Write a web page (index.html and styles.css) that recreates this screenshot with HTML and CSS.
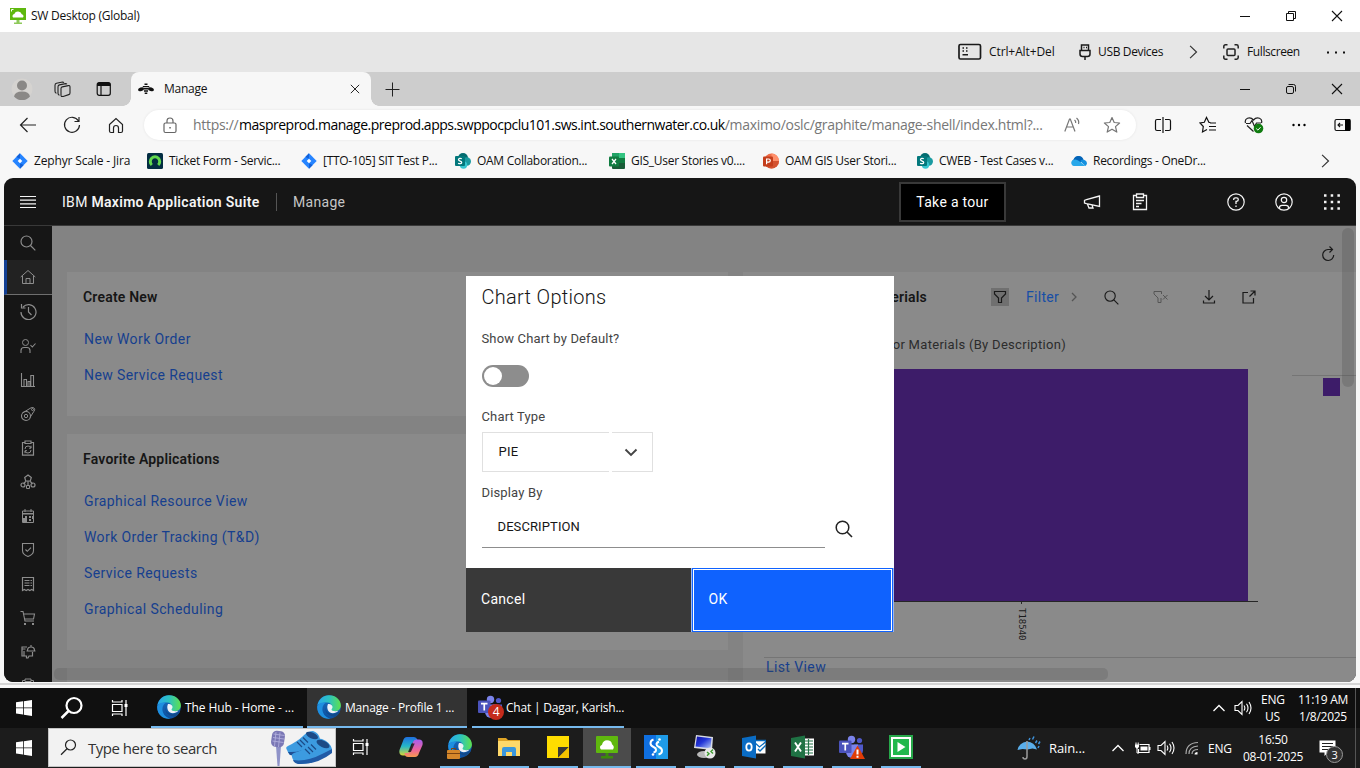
FILE: index.html
```html
<!DOCTYPE html>
<html lang="en">
<head>
<meta charset="utf-8">
<title>SW Desktop (Global)</title>
<link rel="stylesheet" href="styles.css">
</head>
<body>
<svg class="defs" width="0" height="0" aria-hidden="true">
  <defs>
    <linearGradient id="gEdge" x1="0" y1="0" x2="1" y2="0"><stop offset="0" stop-color="#2aa6ee"/><stop offset=".5" stop-color="#2cc3c0"/><stop offset="1" stop-color="#5fe04c"/></linearGradient>
    <linearGradient id="gEdge2" x1="0" y1="0" x2="0" y2="1"><stop offset="0" stop-color="#1b6fc0"/><stop offset="1" stop-color="#0b4fa0"/></linearGradient>
    <linearGradient id="gCoA" x1="0" y1="0" x2="0" y2="1"><stop offset="0" stop-color="#1f6fe0"/><stop offset=".5" stop-color="#25b7c8"/><stop offset="1" stop-color="#d9d735"/></linearGradient>
    <linearGradient id="gCoB" x1="0" y1="0" x2="0" y2="1"><stop offset="0" stop-color="#a65df0"/><stop offset=".6" stop-color="#f0649a"/><stop offset="1" stop-color="#f79a4e"/></linearGradient>
    <linearGradient id="gScreen" x1="0" y1="0" x2="1" y2="1"><stop offset="0" stop-color="#1010a0"/><stop offset=".45" stop-color="#2236d8"/><stop offset="1" stop-color="#b8cdf8"/></linearGradient>
  </defs>
  <symbol id="win-min" viewBox="0 0 12 12"><path d="M1 6.500h10" stroke="#111" fill="none"/></symbol>
  <symbol id="win-max" viewBox="0 0 12 12"><path d="M1.500 3.500h7v7h-7zM3.500 3.500v-2h7v7h-2" stroke="#111" fill="none"/></symbol>
  <symbol id="win-max-r" viewBox="0 0 12 12"><rect x="1.500" y="3.500" width="7" height="7" rx="1.500" stroke="#111" fill="none"/><path d="M3.500 1.500h5a2 2 0 0 1 2 2v5" stroke="#111" fill="none"/></symbol>
  <symbol id="win-x" viewBox="0 0 12 12"><path d="M1 1l10 10M11 1L1 11" stroke="#111" stroke-width="1.1" fill="none"/></symbol>
  <symbol id="jira" viewBox="0 0 16 16"><path d="M8 .3L15.700 8 8 15.700.3 8z" fill="#2684ff"/><path d="M8 .3L4.500 3.800a4.500 4.500 0 0 0 3.500 1.700zM8 15.700l3.500-3.500A4.500 4.500 0 0 0 8 10.500z" fill="#1260d8"/><path d="M8 5.700L10.300 8 8 10.300 5.700 8z" fill="#fff"/></symbol>
  <symbol id="sharepoint" viewBox="0 0 16 16"><circle cx="8" cy="5" r="5" fill="#036c70"/><circle cx="11.800" cy="8.500" r="4.200" fill="#1a9ba1"/><circle cx="8.500" cy="12" r="3.700" fill="#37c6d0"/><rect x="0" y="3" width="10" height="10" rx="1" fill="#03787c"/><path d="M6.800 5.800C5.500 5 3.500 5.200 3.500 6.700c0 1.600 3.200 1.100 3.200 2.700 0 1.500-2.300 1.500-3.600.8" stroke="#fff" stroke-width="1.300" fill="none"/></symbol>
  <symbol id="edge" viewBox="0 0 24 24"><circle cx="12" cy="12" r="11.800" fill="url(#gEdge2)"/><path d="M.4 10.500C1.500 4 6.500.2 12 .2c7 0 12 5 11.900 10.300-.1 3.500-2.600 5.700-5.800 5.700-2.600 0-4.200-.9-4.200-1.800 0-.6 1.200-1 1.200-2.800 0-2-2-4-5.100-4C5.500 7.600 1.500 9 .4 10.500z" fill="url(#gEdge)"/><path d="M.3 11C2 7.500 6 7 9 7.800 6.500 9 5 12 5.500 15.500c.6 4 4 7.500 8 8C6 24.800-.6 19 .3 11z" fill="#1e8fe0"/><path d="M9.500 9.300c-2.500 3-1 9.200 5 9.700 3 .2 5.700-.8 7.300-2.500.6-.4 1 .2.700.8-1 2-3 3.700-5 4.400C9 21 6.300 14 9.500 9.300z" fill="#114a8b"/><path d="M11 9c2.500-.5 4.600 1 4.500 3 0 1.400-1 1.900-1 2.600 0 .9 1.500 1.600 4 1.600 1.300 0 2.300-.3 3-.7-2 2.600-6 3.400-8.500 2C10.500 16 9.500 12 11 9z" fill="#fff" opacity=".92"/></symbol>
  <symbol id="windows" viewBox="0 0 16 16"><path d="M0 2.300L7 1.300v6.200H0zM7.800 1.200L16 0v7.500H7.800zM0 8.300h7v6.300l-7-1zM7.800 8.300H16V16l-8.200-1.200z" fill="#fff"/></symbol>
  <symbol id="taskview" viewBox="0 0 18 18"><path d="M1.500 5.500h9.500v7H1.500zM1.500 1v2h9.500V1M1.500 17v-2h9.500v2M15 1v16" stroke="#fff" stroke-width="1.200" fill="none"/><path d="M13.500 5h3v3h-3z" fill="#fff"/></symbol>
  <symbol id="teams" viewBox="0 0 24 24"><circle cx="12.500" cy="4.500" r="3.700" fill="#7b83eb"/><circle cx="20.500" cy="5.500" r="2.600" fill="#5059c9"/><path d="M15 9.500h9v6a4.500 4.500 0 0 1-6 4.300z" fill="#5059c9"/><path d="M7 9.500h12v7.500a6 6 0 0 1-12 0z" fill="#7b83eb"/><rect x="0" y="5.500" width="12.500" height="12.500" rx="1" fill="#4b53bc"/><path d="M3 8.700h6.500M6.250 8.700V15.500" stroke="#fff" stroke-width="1.700" fill="none"/></symbol>
  <symbol id="speaker" viewBox="0 0 18 16"><path d="M1 5.500h3l4-4v13l-4-4H1z" stroke="#fff" stroke-width="1.100" fill="none"/><path d="M10 5.500q1.700 2.500 0 5M12.500 3.800q3 4.200 0 8.400M15 2q4 6 0 12" stroke="#fff" stroke-width="1.100" fill="none"/></symbol>
  <symbol id="chev-up" viewBox="0 0 12 12"><path d="M.5 9L6 3.500 11.500 9" stroke="#fff" stroke-width="1.300" fill="none"/></symbol>
  <symbol id="chev-right" viewBox="0 0 12 12"><path d="M3.500.8L9 6l-5.500 5.200" stroke="#333" stroke-width="1" fill="none"/></symbol>
  <symbol id="magnify" viewBox="0 0 16 16"><circle cx="6.500" cy="6.500" r="5.500" fill="none" stroke="currentColor" stroke-width="1.200"/><path d="M10.500 10.500L15.300 15.300" stroke="currentColor" stroke-width="1.200"/></symbol>
</svg>

<header class="titlebar">
  <svg class="tb-icon" width="16" height="16" viewBox="0 0 16 16"><path d="M0 0h16v12H0z" fill="#5fb80e"/><path d="M3 9.500a2.500 2.500 0 0 1 1.300-3.600 4 4 0 0 1 7.500.3A2 2 0 0 1 13 9.500z" fill="#fff"/><path d="M1.500 1.500h2M1.500 1.500v2" stroke="#fff"/><path d="M6.500 12h3v2.500H12V16H4v-1.500h2.500z" fill="#8ec95a"/></svg>
  <span class="seg tb-title">SW Desktop (Global)</span>
  <div class="winctl"><svg width="12" height="12"><use href="#win-min"/></svg><svg width="12" height="12"><use href="#win-max"/></svg><svg width="12" height="12"><use href="#win-x"/></svg></div>
</header>

<div class="sessionbar seg">
  <svg class="sb-key" width="24" height="18" viewBox="0 0 24 18"><rect x="1" y="1.500" width="21.500" height="14.500" rx="1.500" fill="none" stroke="#1a1a1a" stroke-width="1.700"/><path d="M4.500 5h1.500M8 5h1.500M4.500 8h1.500M8 8h1.500M4.500 11.800h5.500" stroke="#1a1a1a" stroke-width="1.500"/></svg>
  <span class="sb-cad">Ctrl+Alt+Del</span>
  <svg class="sb-usb" width="12" height="16" viewBox="0 0 12 16"><path d="M2.500 1h7v5.500h-7zM1 6.500h10V10q0 2.500-2.500 2.500h-5Q1 12.500 1 10zM6 12.500V16M4.500 3.500h1M7 3.500h1" stroke="#1a1a1a" stroke-width="1.500" fill="none"/></svg>
  <span class="sb-dev">USB Devices</span>
  <svg class="sb-chev" width="14" height="14"><use href="#chev-right"/></svg>
  <svg class="sb-full" width="16" height="16" viewBox="0 0 16 16"><path d="M.8 4.500V2.500Q.8.800 2.500.8h2M11.500.8h2q1.700 0 1.700 1.700v2M15.200 11.500v2q0 1.700-1.700 1.700h-2M4.500 15.200h-2Q.8 15.200.8 13.500v-2" stroke="#222" stroke-width="1.500" fill="none"/><rect x="4" y="5" width="8" height="6.500" rx="1" fill="none" stroke="#222" stroke-width="1.500"/></svg>
  <span class="sb-fs">Fullscreen</span>
  <svg width="20" height="6" viewBox="0 0 20 6"><path d="M1 2.500h2v2H1zM9 2.500h2v2H9zM17 2.500h2v2h-2z" fill="#111"/></svg>
</div>

<div class="tabstrip">
  <svg class="ts-user" width="22" height="22" viewBox="0 0 22 22"><circle cx="11" cy="11" r="10.500" fill="#d5d3d0"/><circle cx="11" cy="7.500" r="5" fill="#8a8886"/><path d="M3 18.500q1-5 8-5t8 5a10.500 10.500 0 0 1-16 0z" fill="#8a8886"/></svg>
  <svg class="ts-work" width="17" height="17" viewBox="0 0 17 17"><path d="M7 7.500q0-1.300 1.300-1.600l6-1.300q1.700-.3 1.700 1.300v6q0 1.300-1.300 1.700l-5.500 1.800Q7 16 7 14.300z" fill="none" stroke="#222" stroke-width="1.100"/><path d="M5.500 14.200q-1.500-.3-1.500-2V5.800q0-1.500 1.500-1.900l6-1.300q1 0 1.400.7M2.500 12.200Q1 12 1 10.300V4.200q0-1.500 1.500-1.900l6-1.300q1 0 1.400.7" fill="none" stroke="#222" stroke-width="1.100"/></svg>
  <svg class="ts-vert" width="16" height="16" viewBox="0 0 16 16"><rect x="1.200" y="1.700" width="13.100" height="12.600" rx="2" fill="none" stroke="#111" stroke-width="1.200"/><path d="M1 5V3.500Q1 1.500 3 1.500h9.500q2 0 2 2V5z" fill="#111"/><path d="M5 5v9" stroke="#111" stroke-width="1.200"/></svg>
  <div class="tab">
    <svg width="16" height="12" viewBox="0 0 16 12"><ellipse cx="3" cy="6.300" rx="3" ry="1.800" transform="rotate(-18 3 6.300)" fill="#111"/><ellipse cx="13" cy="6.300" rx="3" ry="1.800" transform="rotate(18 13 6.300)" fill="#111"/><path d="M6.500 1.200h3M4.800 3.600h6.400M5.500 5.800h5M6 8h4M6.700 10.300h2.600" stroke="#111" stroke-width="1.400"/></svg>
    <span class="seg tab-name">Manage</span>
    <svg class="tab-x" width="10" height="10" viewBox="0 0 12 12"><use href="#win-x"/></svg>
  </div>
  <svg class="ts-plus" width="15" height="15" viewBox="0 0 15 15"><path d="M7.500 0.500v14M.5 7.500h14" stroke="#222"/></svg>
  <div class="winctl"><svg width="12" height="12"><use href="#win-min"/></svg><svg width="12" height="12"><use href="#win-max-r"/></svg><svg width="12" height="12"><use href="#win-x"/></svg></div>
</div>

<div class="navbar">
  <div class="nav-cell"><svg width="18" height="16" viewBox="0 0 18 16"><path d="M8.500 1L1.500 8l7 7M1.500 8H17" stroke="#222" stroke-width="1.200" fill="none"/></svg></div>
  <div class="nav-cell"><svg width="18" height="18" viewBox="0 0 18 18"><path d="M15.500 5A7.500 7.500 0 1 0 16.500 9M16 1v4.500h-4.500" stroke="#222" stroke-width="1.200" fill="none"/></svg></div>
  <div class="nav-cell"><svg width="16" height="17" viewBox="0 0 16 17"><path d="M1.500 7.500L8 1.500l6.500 6V14q0 1.500-1.500 1.500h-2.500V11q0-2.500-2.500-2.500T5.500 11v4.500H3q-1.500 0-1.500-1.500z" stroke="#222" stroke-width="1.200" fill="none"/></svg></div>
  <div class="address">
    <svg class="lock" width="14" height="17" viewBox="0 0 14 17"><rect x="1" y="6" width="12" height="9.500" rx="1.500" fill="none" stroke="#666" stroke-width="1.200"/><path d="M4 6V4q0-3 3-3t3 3v2" fill="none" stroke="#666" stroke-width="1.200"/><path d="M6.300 10h1.500v1.500H6.300z" fill="#666"/></svg>
    <div class="url seg"><span class="u1">https://</span><span class="u2">maspreprod.manage.preprod.apps.swppocpclu101.sws.int.southernwater.co.uk</span><span class="u3">/maximo/oslc/graphite/manage-shell/index.html?...</span></div>
    <svg class="read" width="17" height="16" viewBox="0 0 17 16"><path d="M.8 14.500L5.500 2h.8L11 14.500M2.600 10h6.600M10.500 3q1.500 1.200 1.200 3M12.500 1q3 2.500 2 6" stroke="#767676" stroke-width="1.200" fill="none"/></svg>
    <svg class="star" width="18" height="18" viewBox="0 0 18 18"><path d="M9 1.500l2.200 5 5.400.5-4.100 3.600 1.300 5.500L9 13.200l-4.800 2.900 1.300-5.500L1.400 7l5.400-.5z" stroke="#767676" stroke-width="1.200" fill="none" stroke-linejoin="round"/></svg>
  </div>
  <div class="tools">
    <svg width="18" height="18" viewBox="0 0 18 18"><path d="M7 3.500H3Q1.500 3.500 1.500 5v8q0 1.500 1.500 1.500h4M11 3.500h4q1.500 0 1.500 1.500v8q0 1.500-1.500 1.500h-4M9 1v16" stroke="#111" stroke-width="1.200" fill="none"/></svg>
    <svg width="18" height="18" viewBox="0 0 18 18"><path d="M11.500 6.500H10L7.500 1.500 5.300 6.300 1 7l3.300 3.500L3.500 16l4.500-2.500M11 7h6M10 10.500h7M10 14h7" stroke="#111" stroke-width="1.200" fill="none"/></svg>
    <svg width="20" height="18" viewBox="0 0 20 18"><path d="M9.500 15.500L3 9.500M1.500 7Q.5 3.500 3.500 2.200 7 1 9.500 4q2.500-3 6-1.800Q18.500 3.500 17.500 7M2 7.500h4l2-3 2.500 6 2-3.500H17" stroke="#222" stroke-width="1.200" fill="none"/><circle cx="14.500" cy="12.500" r="4.800" fill="#107c10"/><path d="M12.300 12.600l1.600 1.500 2.700-2.900" stroke="#fff" fill="none"/></svg>
    <svg width="16" height="6" viewBox="0 0 16 6"><circle cx="2.500" cy="3" r="1.200"/><circle cx="8" cy="3" r="1.200"/><circle cx="13.500" cy="3" r="1.200"/></svg>
    <svg width="17" height="14" viewBox="0 0 17 14"><rect x="1" y="1.500" width="15" height="11" rx="1.500" fill="none" stroke="#111" stroke-width="1.200"/><path d="M11 1h4.500q1 0 1 1v10q0 1-1 1H11z" fill="#000"/><path d="M9 7H4M6 5L4 7l2 2" fill="none" stroke="#111" stroke-width="1.100"/></svg>
  </div>
</div>

<div class="bookmarks seg">
  <div class="bm bm1"><svg width="16" height="16"><use href="#jira"/></svg><span>Zephyr Scale - Jira</span></div>
  <div class="bm bm2"><svg width="16" height="16" viewBox="0 0 16 16"><rect width="16" height="16" rx="1.500" fill="#032d42"/><path d="M4.800 12A4.700 4.700 0 1 1 11.200 12" fill="none" stroke="#62d84e" stroke-width="3"/></svg><span>Ticket Form - Servic...</span></div>
  <div class="bm bm3"><svg width="16" height="16"><use href="#jira"/></svg><span>[TTO-105] SIT Test P...</span></div>
  <div class="bm bm4"><svg width="16" height="16"><use href="#sharepoint"/></svg><span>OAM Collaboration...</span></div>
  <div class="bm bm5"><svg width="16" height="16" viewBox="0 0 16 16"><rect x="3" width="13" height="16" rx="1" fill="#185c37"/><path d="M3 0h7v8H3z" fill="#21a366"/><path d="M10 0h6v5h-6z" fill="#33c481"/><path d="M10 5h6v5h-6z" fill="#107c41"/><rect y="3.500" width="10" height="10" rx="1" fill="#107c41"/><path d="M3 6l4 5M7 6l-4 5" stroke="#fff" stroke-width="1.300"/></svg><span>GIS_User Stories v0....</span></div>
  <div class="bm bm6"><svg width="16" height="16" viewBox="0 0 16 16"><circle cx="8.500" cy="8" r="7.500" fill="#ed6c47"/><path d="M8.500.5a7.500 7.500 0 0 1 7.500 7.500H8.500z" fill="#ff8f6b"/><path d="M1 8h15a7.500 7.500 0 0 1-15 0z" fill="#d35230"/><rect y="3.500" width="10" height="10" rx="1" fill="#c43e1c"/><path d="M3.600 11.300V6h2q1.700 0 1.700 1.600T5.600 9.200h-2" stroke="#fff" stroke-width="1.200" fill="none"/></svg><span>OAM GIS User Stori...</span></div>
  <div class="bm bm7"><svg width="16" height="16"><use href="#sharepoint"/></svg><span>CWEB - Test Cases v...</span></div>
  <div class="bm bm8"><svg width="16" height="16" viewBox="0 0 16 16"><path d="M2 11Q0 8.500 2.500 6.500 4 2.500 7.500 3q3.500-.5 5 3.500L8 11z" fill="#0364b8"/><path d="M9 8q3-3 6 0 2 2.500-.5 5z" fill="#1490df"/><path d="M1 12q-2-3 1-5 3-1.500 6 1l6.500 5H3q-1.300 0-2-1z" fill="#28a8ea"/></svg><span>Recordings - OneDr...</span></div>
  <svg width="14" height="14"><use href="#chev-right"/></svg>
</div>

<div class="viewport">
  <div class="app plex">
    <div class="mas-header">
      <svg class="burger" width="16" height="12" viewBox="0 0 16 12"><path d="M0 .5h16M0 4.200h16M0 7.800h16M0 11.500h16" stroke="#f4f4f4" stroke-width="1.200"/></svg>
      <span class="brand">IBM <b>Maximo Application Suite</b></span>
      <span class="appname">Manage</span>
      <button class="tour">Take a tour</button>
      <div class="hicons">
        <svg width="18" height="18" viewBox="0 0 18 18"><path d="M16.500 3L3.500 6.500 1.500 7.500V10l2 .7 13 2.800zM4.500 11.200L6 15h4l-1-3" stroke="#f4f4f4" stroke-width="1.300" fill="none"/></svg>
        <svg width="18" height="18" viewBox="0 0 18 18"><path d="M5.500 2.500H2.500v14h13v-14h-3M5.500 1h7v3.500h-7zM5 7.500h8M5 10.500h5.500M5 13.500h3" stroke="#f4f4f4" stroke-width="1.300" fill="none"/></svg>
        <svg class="hi-help" width="18" height="18" viewBox="0 0 18 18"><circle cx="9" cy="9" r="8.200" fill="none" stroke="#f4f4f4" stroke-width="1.200"/><path d="M6.700 7V6.500q0-1.700 1.700-1.700h1.200q1.700 0 1.700 1.700T9.600 8.400H9V11M9 12.500V14" fill="none" stroke="#f4f4f4" stroke-width="1.300"/></svg>
        <svg width="18" height="18" viewBox="0 0 18 18"><circle cx="9" cy="9" r="8.200" fill="none" stroke="#f4f4f4" stroke-width="1.200"/><circle cx="9" cy="7" r="2.700" fill="none" stroke="#f4f4f4" stroke-width="1.200"/><path d="M4.500 15.500v-1q0-2.200 2.500-2.200h4q2.500 0 2.500 2.200v1" fill="none" stroke="#f4f4f4" stroke-width="1.200"/></svg>
        <svg width="18" height="18" viewBox="0 0 18 18"><path d="M1 2.500h2.500M7.700 2.500h2.500M14.400 2.500h2.500M1 9h2.500M7.700 9h2.500M14.400 9h2.500M1 15.500h2.500M7.700 15.500h2.500M14.400 15.500h2.500" stroke="#f4f4f4" stroke-width="2.500"/></svg>
      </div>
    </div>
    <div class="mas-body">
      <nav class="side">
        <div class="si"><svg width="16" height="16"><use href="#magnify"/></svg></div>
        <div class="si on"><svg width="16" height="16" viewBox="0 0 16 16"><path d="M.7 8L8 1.500 15.300 8M2.500 7v7.500h11V7M6 14.500V9.500h4v5" fill="none" stroke="currentColor"/></svg></div>
        <div class="si"><svg width="17" height="17" viewBox="0 0 17 17"><path d="M3 4A7.500 7.500 0 1 1 1 9M1.500 1v4h4M8.500 4v5l3 3" fill="none" stroke="currentColor" stroke-width="1.200"/></svg></div>
        <div class="si"><svg width="16" height="16" viewBox="0 0 16 16"><circle cx="5.500" cy="4.500" r="3" fill="none" stroke="currentColor"/><path d="M1 15v-2.500Q1 9.500 4 9.500h3q3 0 3 3V15M10.500 7l1.800 2L15.500 5.500" fill="none" stroke="currentColor" stroke-width="1.100"/></svg></div>
        <div class="si"><svg width="16" height="16" viewBox="0 0 16 16"><path d="M1.500 1v13.500H15M4 14.500v-7h2.500v7M8 14.500v-5h2v5M10.800 14.500v-11H13.500v11" fill="none" stroke="currentColor" stroke-width="1.100"/></svg></div>
        <div class="si"><svg width="16" height="16" viewBox="0 0 16 16"><circle cx="6" cy="10" r="4.500" fill="none" stroke="currentColor" stroke-width="1.100"/><circle cx="6" cy="10" r="1.700" fill="none" stroke="currentColor"/><path d="M2.500 7L11 1.800q2.500-.8 3.500.7.700 1.200-.5 2.700L10 11.500" fill="none" stroke="currentColor"/><circle cx="12.500" cy="3.500" r="1" fill="none" stroke="currentColor"/></svg></div>
        <div class="si"><svg width="16" height="16" viewBox="0 0 16 16"><path d="M5 2.500H2.500v12.700h11V2.500H11M5 1h6v2.500H5z" fill="none" stroke="currentColor" stroke-width="1.200"/><path d="M5 9q0-3 3-3t3 2M11 10q0 3-3 3t-3-2M11 5.700v2.500H9M5 13.200v-2.500h2" fill="none" stroke="currentColor"/></svg></div>
        <div class="si"><svg width="16" height="16" viewBox="0 0 16 16"><path d="M8 1l3.300 2.500-1 3.500H5.700l-1-3.500zM6 7l-2.500 3M10 7l2.500 3M8 7v4" fill="none" stroke="currentColor" stroke-width="1.200"/><circle cx="3" cy="11" r="2" fill="none" stroke="currentColor" stroke-width="1.200"/><circle cx="13" cy="11" r="2" fill="none" stroke="currentColor" stroke-width="1.200"/><path d="M6.500 11.500h3v3h-3z" fill="none" stroke="currentColor"/></svg></div>
        <div class="si"><svg width="16" height="16" viewBox="0 0 16 16"><path d="M2.500 3h11v11.500h-11zM5 1v3M11 1v3" fill="none" stroke="currentColor"/><path d="M2 5h12v1.500H2zM5 8h2v2H5zM9 8h2v2H9zM2 10h5v4H2zM9 11h2v2H9zM12 8h2v3h-2z" fill="currentColor"/></svg></div>
        <div class="si"><svg width="16" height="16" viewBox="0 0 16 16"><path d="M2.500 1.500h11v7q0 4-5.500 6-5.500-2-5.500-6zM5.500 7.500l1.800 1.800L11 5.700" fill="none" stroke="currentColor" stroke-width="1.100"/></svg></div>
        <div class="si"><svg width="16" height="16" viewBox="0 0 16 16"><path d="M2.500 14.500v-13h11v13l-1.800-1-1.900 1-1.800-1-1.800 1-1.900-1zM4.500 4.500h5M4.500 7h5M4.500 9.500h5M10.500 4.500h1.500M10.500 7h1.500M10.500 9.500h1.500" fill="none" stroke="currentColor" stroke-width="1.200"/></svg></div>
        <div class="si"><svg width="16" height="16" viewBox="0 0 16 16"><path d="M.5 1.500h2.500l2 9.500h9M4 4h10.500l-1 5H5" fill="none" stroke="currentColor" stroke-width="1.100"/><path d="M4 13h2v2H4zM12 13h2v2h-2z" fill="currentColor"/></svg></div>
        <div class="si"><svg width="16" height="16" viewBox="0 0 16 16"><path d="M7 3H2v9h3M5.500 5h-4M6.500 7h9M7.500 6.500q0-3.500 3.500-3.500t3.500 3.500M11 3V1M4 7v5h2.500v2H8l1-2h3.500V8" fill="none" stroke="currentColor" stroke-width="1.200"/></svg></div>
        <div class="si"><svg width="16" height="16" viewBox="0 0 16 16"><path d="M5 2.500H2.500v12.700h11V2.500H11M5 1h6v2.500H5z" fill="none" stroke="currentColor"/></svg></div>
      </nav>
      <main class="content">
        <div class="refresh"><svg width="14" height="16" viewBox="0 0 14 16"><path d="M11.500 3.500H7A5.500 5.500 0 1 0 12.700 9M8.500 .5l3 3-3 3" fill="none" stroke="#1a1a1a" stroke-width="1.200"/></svg></div>
        <div class="columns">
          <div class="left">
            <section class="card c-new">
              <h2>Create New</h2>
              <a>New Work Order</a>
              <a>New Service Request</a>
            </section>
            <section class="card c-fav">
              <h2>Favorite Applications</h2>
              <a>Graphical Resource View</a>
              <a>Work Order Tracking (T&amp;D)</a>
              <a>Service Requests</a>
              <a>Graphical Scheduling</a>
            </section>
            <section class="card c-next"></section>
          </div>
          <section class="card right">
            <div class="r-head">
              <h2>Materials</h2>
              <span class="f-btn"><svg width="14" height="14" viewBox="0 0 14 14"><path d="M1.500 1.500h11V4L8.500 8v4.500h-3V8l-4-4z" fill="none" stroke="#1a1a1a" stroke-width="1.200"/></svg></span>
              <span class="f-text">Filter</span>
              <svg class="f-chev" width="8" height="10" viewBox="0 0 8 10"><path d="M2 1l4 4-4 4" fill="none" stroke="#555" stroke-width="1.300"/></svg>
              <svg class="f-find" width="15" height="15"><use href="#magnify"/></svg>
              <svg class="f-clear" width="16" height="14" viewBox="0 0 16 14"><path d="M8.500 4V1.500H1V4l4 4v4.500h3V8M10 5l4.500 4.500M14.500 5L10 9.500" fill="none" stroke="#555"/></svg>
              <svg class="f-down" width="14" height="14" viewBox="0 0 14 14"><path d="M7 0v9.500M3 6l4 4 4-4M1.500 10.500V13h11v-2.500" fill="none" stroke="#1a1a1a" stroke-width="1.200"/></svg>
              <svg class="f-pop" width="14" height="14" viewBox="0 0 14 14"><path d="M6 2.500H1v10.500h10.500V8M8.500 1H13v4.500M13 1L7.500 6.500" fill="none" stroke="#1a1a1a" stroke-width="1.200"/></svg>
            </div>
            <div class="r-title">for Materials (By Description)</div>
            <div class="chart">
              <div class="plot">
                <div class="bar"></div>
                <div class="axis"></div>
                <div class="mark"></div>
                <div class="tick">T18540</div>
              </div>
              <div class="legend"><i></i></div>
            </div>
            <div class="r-foot"><a>List View</a></div>
          </section>
        </div>
        <i class="vscroll"></i><i class="hscroll"></i>
      </main>
    </div>
    <div class="dialog">
      <div class="d-body">
        <h1>Chart Options</h1>
        <label class="d-show">Show Chart by Default?</label>
        <div class="toggle"><i></i></div>
        <label class="d-type">Chart Type</label>
        <div class="select"><span>PIE</span><div class="arrow"><svg width="14" height="9" viewBox="0 0 14 9"><path d="M1.500 1.500L7 7l5.500-5.500" fill="none" stroke="#444" stroke-width="1.900"/></svg></div></div>
        <label class="d-by">Display By</label>
        <div class="lookup"><span>DESCRIPTION</span><svg width="18" height="18" viewBox="0 0 18 18"><circle cx="7.500" cy="7.500" r="6.300" fill="none" stroke="#222" stroke-width="1.500"/><path d="M12 12l5 5" stroke="#222" stroke-width="1.600"/></svg></div>
      </div>
      <div class="d-foot"><button class="cancel">Cancel</button><button class="ok">OK</button></div>
    </div>
  </div>
</div>

<div class="taskbar tb-remote seg">
  <div class="t48"><svg width="16" height="16"><use href="#windows"/></svg></div>
  <div class="t48"><svg width="24" height="24" viewBox="0 0 24 24"><circle cx="14" cy="9.500" r="7.500" fill="none" stroke="#fff" stroke-width="2.200"/><path d="M8.500 15L1.500 22" stroke="#fff" stroke-width="2.500"/></svg></div>
  <div class="t48"><svg width="18" height="18"><use href="#taskview"/></svg></div>
  <div class="task k1"><svg width="24" height="24"><use href="#edge"/></svg><span>The Hub - Home - ...</span></div>
  <div class="task k2"><svg width="24" height="24"><use href="#edge"/></svg><span>Manage - Profile 1 ...</span></div>
  <div class="task k3"><div class="teams"><svg width="24" height="24"><use href="#teams"/></svg><b>4</b></div><span>Chat | Dagar, Karish...</span></div>
  <div class="tray">
    <svg class="r-up" width="12" height="12"><use href="#chev-up"/></svg>
    <svg class="r-spk" width="18" height="16"><use href="#speaker"/></svg>
    <div class="lang">ENG<br>US</div>
    <div class="clock c1">11:19 AM<br>1/8/2025</div>
    <i class="edge-line"></i>
  </div>
</div>

<div class="taskbar tb-local seg">
  <div class="t48"><svg width="16" height="16"><use href="#windows"/></svg></div>
  <div class="search">
    <svg width="17" height="17" viewBox="0 0 17 17"><circle cx="10.500" cy="6" r="5" fill="none" stroke="#222" stroke-width="1.200"/><path d="M7 9.700L1 15.700" stroke="#222" stroke-width="1.300"/></svg>
    <span>Type here to search</span>
    <svg class="art" width="66" height="37" viewBox="0 0 66 37">
      <path d="M7 17L8.500 37h2L12 17z" fill="#8f93c8"/><rect x="2.500" y="2" width="13" height="16" rx="4.500" fill="#7a77b5" transform="rotate(8 9 10)"/><path d="M4.500 5l11 1.500M4 8.500l11 1.500M3.500 12l11 1.500M7 3L5.500 17M11 3.500L9.500 18" stroke="#b6b4e0" stroke-width=".8"/>
      <path d="M18 21q-2-3 1-4 10-5 15-10 5-5 10-5 6 2 7 8 0 5-6 8-9 10-24 8-2-2-3-5z" fill="#3c9be0"/><path d="M19 23q13 1 25-7l6-4v3Q38 28 21 26z" fill="#1e4f94"/><path d="M28 13l5 5M31 11l5 5M34 8.500l5 5" stroke="#1b4a86" stroke-width="1.200"/><ellipse cx="43" cy="6.500" rx="6.500" ry="3" transform="rotate(25 43 6.500)" fill="#1b4a86"/>
      <path d="M23 28q-1-3 2-4 10-3 17-9 5-6 11-5 8 3 10 10-2 6-10 7-9 8-23 8-6-2-7-7z" fill="#3c9be0"/><path d="M24 31q14 2 29-6l10-5v4Q48 36 29 35q-4-1-5-4z" fill="#205aa6"/><path d="M36 20l5 5M39 18l5 5M42 15.500l5 5" stroke="#1b4a86" stroke-width="1.200"/><ellipse cx="54" cy="15" rx="7" ry="3.200" transform="rotate(25 54 15)" fill="#1b4a86"/>
    </svg>
  </div>
  <div class="pin plain p0"><svg width="18" height="18"><use href="#taskview"/></svg></div>
  <div class="pin plain"><svg width="24" height="24" viewBox="0 0 24 24"><path d="M8 2h7q2.500 0 3.300 2.500L19 7h-3.500q-2 0-2.700 2L10 18q-.8 2.500-3.500 2.500H4Q-.5 20.500.5 15l3.500-9q1-4 4-4z" fill="url(#gCoA)"/><path d="M16 22H9q-2.500 0-3.300-2.500L5.500 18H8.500q2 0 2.700-2L14 7q.8-2.500 3.500-2.500H20Q24.500 4.500 23.500 10L20 18q-1 4-4 4z" fill="url(#gCoB)"/><path d="M12.500 8.500h3.200l-3.800 8.500H9z" fill="#1c1c1c" opacity=".85"/></svg></div>
  <div class="pin"><svg width="26" height="26" viewBox="0 0 26 26"><svg x="1" y="0" width="24" height="24"><use href="#edge"/></svg><rect x="0" y="16" width="13" height="9" rx="1" fill="#d4872a"/><path d="M0 19.500h13M4.500 16v-1.500h4V16" stroke="#7a4310" fill="none"/></svg></div>
  <div class="pin"><svg width="22" height="20" viewBox="0 0 22 20"><path d="M0 1h8l2 2h12v16H0z" fill="#e0a526"/><path d="M0 4h22v15H0z" fill="#ffd96a"/><path d="M4 19v-7q0-2 2-2h10q2 0 2 2v7h-4v-4H8v4z" fill="#3b97dc"/></svg></div>
  <div class="pin"><svg width="22" height="22" viewBox="0 0 22 22"><path d="M0 0h22v22H0z" fill="#fd0"/><path d="M11 22V11h11z" fill="#3a3a34"/><path d="M22 11L11 22h11z" fill="#f5c400"/></svg></div>
  <div class="pin active"><svg width="22" height="23" viewBox="0 0 22 23"><rect width="22" height="17" rx="1" fill="#5fb80e"/><path d="M5 13.500q-2.500-3 1-4.800 1-4.500 5-4.500 4.500 0 5 4 3 2.300 1 5.300z" fill="#fff"/><path d="M9.500 17h3v3H17v2.500H5V20h4.500z" fill="#3c8a0c"/></svg></div>
  <div class="pin"><svg width="24" height="24" viewBox="0 0 24 24"><rect width="24" height="24" fill="#0f6fe0"/><path d="M12 0h12v24H12z" fill="#1e9be8"/><path d="M9.500 4.500Q6.500 5.500 6.500 8.300q0 2.500 3 3.700 2.500 1 2.500 3t-2.500 2.500M14.500 19.500q3.500-1 3.500-3.800 0-2.500-3-3.700-2.500-1-2.500-2.700T15 6.800" stroke="#fff" stroke-width="2" fill="none"/><circle cx="15.500" cy="4.500" r="1.300" fill="#fff"/><circle cx="9" cy="19.500" r="1.300" fill="#fff"/></svg></div>
  <div class="pin"><svg width="24" height="24" viewBox="0 0 24 24"><path d="M3 0l17 2-1 13L1 13z" fill="#d8dbe4"/><path d="M4 1.500l14.500 1.800-1 10L2.500 11.500z" fill="url(#gScreen)"/><ellipse cx="11" cy="19.500" rx="7" ry="3.500" fill="#b8b8b8"/><circle cx="17" cy="18" r="5.500" fill="#e8e8e8"/><path d="M14 17l2 1.700-2 2M20 14.500l-2 2 2 2" stroke="#3b9b2c" stroke-width="1.400" fill="none"/></svg></div>
  <div class="pin"><svg width="24" height="24" viewBox="0 0 24 24"><path d="M12 5.500h11.500v13H12z" fill="#fff"/><path d="M12 7l5.500 5L23.500 7v-1.500H12zM16 14l2 2 6-6" fill="#fff" stroke="#0a6cbc" stroke-width="1.300"/><path d="M0 3l14-2.500v23L0 21z" fill="#0a6cc4"/><ellipse cx="7" cy="12" rx="2.700" ry="3.600" fill="none" stroke="#fff" stroke-width="1.800"/></svg></div>
  <div class="pin"><svg width="24" height="24" viewBox="0 0 24 24"><path d="M12 3.500h11v17H12z" fill="#fff"/><path d="M13 6h9M13 9h9M13 12h9M13 15h9M13 18h9M17.500 4v16" stroke="#217346" stroke-width="1.200"/><path d="M0 3l14-2.500v23L0 21z" fill="#1f7244"/><path d="M4 7.500l6 9M10 7.500l-6 9" stroke="#fff" stroke-width="1.900"/></svg></div>
  <div class="pin"><svg width="26" height="25" viewBox="0 0 26 25"><svg width="24" height="24"><use href="#teams"/></svg><path d="M18.500 10.500L26 24H11z" fill="#e03c06"/><path d="M18.500 14.500v5M18.500 20.700v2" stroke="#fff" stroke-width="2"/></svg></div>
  <div class="pin"><svg width="24" height="24" viewBox="0 0 24 24"><rect width="24" height="24" fill="#27a84a"/><rect x="3" y="3" width="18" height="18" fill="#22b84c" stroke="#fff" stroke-width="2"/><path d="M8.500 7v10l8-5z" fill="#fff"/></svg></div>
  <div class="tray">
    <svg class="l-umb" width="24" height="24" viewBox="0 0 24 24"><path d="M.5 14Q2 6.500 10 5.500 17.500 6 20 13.500l-4.500-1-5 1-5-.5z" fill="#5aaeea"/><path d="M10 5v15.500q0 2.500-2 2.500t-2-2" stroke="#9a9a9a" stroke-width="1.500" fill="none"/><path d="M13 2l-1 2M17 .5l-1.500 3M20 4.500l-1.500 2.500M23 5.500L21.500 8M22 10l-1 2" stroke="#3f94dd" stroke-width="1.500"/></svg>
    <span class="l-rain">Rain...</span>
    <svg class="l-up" width="12" height="12"><use href="#chev-up"/></svg>
    <svg class="l-bat" width="17" height="13" viewBox="0 0 17 13"><path d="M5.500 2.500H15v8H4.500V7" fill="none" stroke="#fff" stroke-width="1.200"/><path d="M6.500 4.500h7v4h-7zM15 5h1.500v3H15zM1 2.500h4v2.500L3.500 6.500H2.500L1 5zM1.500.5h1v2h-1zM3.700.5h1v2h-1z" fill="#fff"/><path d="M3 6v5h2" stroke="#fff" fill="none"/></svg>
    <svg class="l-spk" width="18" height="16"><use href="#speaker"/></svg>
    <svg class="l-wifi" width="14" height="14" viewBox="0 0 14 14"><path d="M1 13Q1 2 13 1.500M4 13Q4 5.500 13 5M7 13q0-4.500 6-4.500" stroke="#aaa" fill="none" stroke-width="1.200"/><path d="M9.500 13.500q0-2.500 3-2.500v2.500z" fill="#fff"/></svg>
    <span class="l-eng">ENG</span>
    <div class="clock c2">16:50<br>08-01-2025</div>
    <div class="note"><svg width="17" height="17" viewBox="0 0 17 17"><path d="M.5.500h16v12H9L5.500 16v-3.500h-5z" fill="#fff"/><path d="M3 3.500h11M3 6.500h11M3 9.500h7" stroke="#222" stroke-width="1.200"/></svg><b>3</b></div>
    <i class="edge-line"></i>
  </div>
</div>
</body>
</html>
```
FILE: styles.css
```css
* { box-sizing: border-box; }
html, body { margin: 0; padding: 0; }
body { width: 1360px; height: 768px; overflow: hidden; background: #f7f7f7; display: flex; flex-direction: column; color: #111; }
svg { display: block; flex: none; }
.defs { position: absolute; }
.seg { font-family: "Open Sans", "Noto Sans", sans-serif; font-size: 12px; letter-spacing: -0.25px; white-space: nowrap; }
.plex { font-family: Roboto, "Liberation Sans", sans-serif; font-size: 13px; letter-spacing: .3px; white-space: nowrap; }
button { font: inherit; border: 0; padding: 0; margin: 0; letter-spacing: inherit; }

/* remote session window */
.titlebar { flex: 0 0 32px; display: flex; align-items: center; background: #fff; padding-left: 10px; }
.tb-title { margin-left: 5px; padding-bottom: 1px; }
.winctl { margin-left: auto; display: flex; }
.winctl svg { margin: 0 17px; }
.sessionbar { flex: 0 0 40px; display: flex; align-items: center; background: #e6e6e6; padding-left: 958px; }
.sessionbar span { padding-bottom: 1px; flex: none; }
.sb-key { margin-right: 7px; }
.sb-cad { width: 90px; letter-spacing: -0.1px; }
.sb-usb { margin-right: 7px; }
.sb-dev { width: 88px; letter-spacing: -0.35px; }
.sb-chev { margin-right: 23px; }
.sb-full { margin-right: 8px; }
.sb-fs { width: 79px; letter-spacing: -0.4px; }

/* browser chrome */
.tabstrip { flex: 0 0 34px; display: flex; align-items: center; background: #cdcdcd; padding-left: 11px; }
.ts-work { margin-left: 21px; }
.ts-vert { margin: 0 19px 0 25px; }
.tab { position: relative; align-self: stretch; width: 240px; padding: 0 11px 0 7px; display: flex; align-items: center; background: #f7f7f7; border-radius: 8px 8px 0 0; }
.tab::before, .tab::after { content: ""; position: absolute; bottom: 0; width: 8px; height: 8px; }
.tab::before { left: -8px; background: radial-gradient(circle at 0 0, transparent 7.500px, #f7f7f7 8px); }
.tab::after { right: -8px; background: radial-gradient(circle at 100% 0, transparent 7.500px, #f7f7f7 8px); }
.tab-name { margin-left: 10px; padding-bottom: 1px; }
.tab-x { margin-left: auto; }
.ts-plus { margin-left: 14px; }
.navbar { flex: 0 0 38px; display: flex; align-items: center; padding-left: 6px; background: #f7f7f7; }
.nav-cell { flex: 0 0 44px; display: flex; justify-content: center; }
.address { flex: 0 0 992px; display: flex; align-items: center; height: 30px; margin-left: 6px; padding-left: 19px; border-radius: 15px; background: #fff; box-shadow: 0 0 3px rgba(0,0,0,.08); }
.url { flex: 0 0 871px; margin-left: 16px; font-size: 14px; color: #777; display: flex; padding-bottom: 1px; letter-spacing: -0.3px; }
.u1 { flex: 0 0 46px; }
.u2 { flex: 0 0 484px; color: #000; letter-spacing: -0.5px; }
.star { margin-left: 22px; }
.tools { display: flex; flex: none; align-items: center; margin-left: 18px; }
.tools svg { margin-right: 27px; }
.bookmarks { flex: 0 0 34px; display: flex; align-items: center; padding-left: 12px; background: #f7f7f7; }
.bm { display: flex; gap: 6px; align-items: center; flex: 0 0 154px; letter-spacing: -0.28px; }
.bm span { padding-bottom: 2px; }
.bm1 { flex-basis: 135px; letter-spacing: -0.15px; }
.bm8 { flex-basis: 247px; }

/* application frame */
.viewport { flex: 0 0 510px; padding: 0 4px 6px; background: linear-gradient(#f7f7f7 505px, #d4d4d4 505px 507px, #f7f7f7 507px); }
.app { position: relative; height: 504px; display: flex; flex-direction: column; border-radius: 9px; overflow: hidden; background: #161616; }
.mas-header { flex: 0 0 48px; display: flex; align-items: center; padding-left: 16px; border-bottom: 1px solid #393939; color: #f4f4f4; }
.brand { width: 214px; margin-left: 26px; font-size: 14px; }
.brand b { font-weight: 600; }
.appname { width: 609px; padding-left: 16px; border-left: 1px solid #555; font-size: 14px; line-height: 18px; color: #c6c6c6; }
.tour { width: 107px; height: 40px; margin-left: 14px; background: #000; border: 2px solid #393939; color: #fff; font-size: 14px; }
.hicons { display: flex; margin-left: 77px; gap: 30px; }
.hi-help { margin-left: 48px; }
.mas-body { flex: 1; min-height: 0; display: flex; }
.side { flex: 0 0 48px; overflow: hidden; background: #161616; color: #8d8d8d; }
.si { height: 34px; display: flex; align-items: center; justify-content: center; }
.si.on { height: 35px; background: #222; border-left: 3px solid #123f93; border-bottom: 1px solid #6f6f6f; padding-right: 3px; }
.si.on + .si { padding-bottom: 1px; }
.content { position: relative; flex: 1; min-width: 0; height: 456px; overflow: hidden; background: #838383; display: flex; flex-direction: column; }
.refresh { flex: 0 0 46px; display: flex; justify-content: flex-end; padding: 20px 21px 0 0; }
.columns { flex: 1; min-height: 0; display: flex; gap: 15px; padding-left: 15px; }
.left { width: 661px; display: flex; flex-direction: column; gap: 18px; }
.card { background: #8a8a8a; }
.card h2 { margin: 0; font-size: 14px; font-weight: 600; line-height: 20px; color: #161616; letter-spacing: .2px; }
.card a { color: #163f8e; letter-spacing: .4px; }
.left .card { padding-left: 16px; display: flex; flex-direction: column; }
.left a { padding-left: 1px; height: 36px; line-height: 36px; font-size: 14px; }
.c-new { flex: 0 0 144px; padding-top: 15px; }
.c-fav { flex: 0 0 216px; padding-top: 15px; }
.left h2 + a { margin-top: 14px; }
.c-next { flex: 0 0 40px; }
.right { width: 613px; padding-left: 8px; display: flex; flex-direction: column; }
.r-head { flex: 0 0 50px; display: flex; align-items: center; }
.card .r-head h2 { width: 176px; text-align: right; }
.f-btn { width: 18px; height: 18px; margin-left: 64px; background: #707070; display: flex; align-items: center; justify-content: center; }
.f-text { width: 44px; margin-left: 17px; color: #174ea6; font-size: 14px; }
.f-find { margin-left: 26px; color: #1a1a1a; }
.f-clear { margin-left: 34px; }
.f-down { margin-left: 33px; }
.f-pop { margin-left: 26px; }
.r-title { width: 315px; height: 47px; line-height: 45px; text-align: right; color: #2c2c2c; }
.chart { flex: 0 0 288px; display: flex; }
.plot { width: 507px; }
.bar { width: 497px; height: 232px; background: #3d1c69; }
.axis { height: 1px; background: #262626; }
.mark { width: 1px; height: 2px; margin-left: 270px; background: #262626; }
.tick { margin-left: 264px; height: 39px; padding-top: 4px; writing-mode: vertical-rl; font: 9px/13px "DejaVu Sans Mono", monospace; letter-spacing: 0; color: #1a1a1a; }
.legend { width: 64px; height: 27px; margin: 6px 0 0 34px; border-top: 1px solid #757575; padding: 2px 0 0 31px; }
.legend i { display: block; width: 17px; height: 18px; background: #3d1c69; }
.r-foot { margin-left: 13px; border-top: 1px solid #757575; line-height: 18px; font-size: 14px; padding-left: 2px; }
.vscroll { position: absolute; right: 2px; top: 2px; width: 12px; height: 159px; border-radius: 6px; background: rgba(70,70,70,.25); }
.hscroll { position: absolute; left: 2px; bottom: 2px; width: 1054px; height: 12px; border-radius: 5px; background: rgba(70,70,70,.2); }

/* chart options dialog */
.dialog { position: absolute; left: 461.500px; top: 98px; width: 428.700px; height: 356px; display: flex; flex-direction: column; background: #fff; color: #161616; }
.d-body { height: 292px; padding: 9px 16px 0; display: flex; flex-direction: column; }
.d-body h1 { margin: 0; font-size: 20px; line-height: 24px; font-weight: 300; }
.d-body label { color: #444; line-height: 16px; font-size: 13px; letter-spacing: .15px; }
.d-show { margin-top: 22px; }
.toggle { width: 47px; height: 22px; margin-top: 18px; padding: 2px; border-radius: 11px; background: #8d8d8d; }
.toggle i { display: block; width: 18px; height: 18px; border-radius: 9px; background: #fff; }
.d-type { margin-top: 22px; }
.select { width: 171px; height: 40px; margin-top: 7px; display: flex; gap: 3px; }
.select span { width: 127px; border: 1px solid #e0e0e0; border-right: 0; padding-left: 16px; line-height: 38px; }
.arrow { flex: 1; border: 1px solid #e0e0e0; border-left: 0; display: flex; align-items: center; justify-content: center; padding-right: 2px; }
.d-by { margin-top: 13px; }
.lookup { display: flex; align-items: center; height: 47px; }
.lookup span { width: 343px; height: 47px; line-height: 52px; padding-left: 16px; border-bottom: 1px solid #8d8d8d; margin-right: 10px; letter-spacing: .1px; }
.lookup svg { margin-top: 8px; }
.d-foot { height: 64px; display: flex; gap: 1px; background: #9ab8f5; padding-right: 1px; }
.d-foot button { text-align: left; padding-left: 15.500px; color: #fff; font-size: 14px; padding-bottom: 2px; }
.cancel { width: 225.500px; background: #393939; }
.ok { flex: 1; background: #0f62fe; border: 1px solid #0f62fe; box-shadow: inset 0 0 0 1px #fff; }

/* taskbars */
.taskbar { flex: 0 0 40px; display: flex; align-items: stretch; color: #fff; }
.tb-remote { background: #101010; }
.tb-local { background: #1c1c1c; }
.t48 { width: 48px; display: flex; align-items: center; justify-content: center; }
.task { display: flex; align-items: center; gap: 4px; width: 152px; padding-left: 6px; border-bottom: 2px solid #76b9ed; }
.k1 { margin-left: 7px; letter-spacing: -0.1px; }
.k2 { width: 160px; margin-left: 4px; padding-left: 10px; background: #333; letter-spacing: -0.2px; }
.k3 { margin-left: 5px; letter-spacing: -0.2px; }
.teams { position: relative; }
.teams b { position: absolute; left: 10px; top: 9px; width: 16px; height: 16px; border-radius: 8px; background: #c42b1c; text-align: center; font-weight: 400; line-height: 16px; }
.tray { margin-left: auto; display: flex; align-items: center; }
.r-spk { margin: 0 9px 0 9px; }
.lang, .clock { text-align: center; line-height: 17px; }
.lang { width: 23px; }
.clock { width: 60px; }
.c1 { margin: 0 2px 0 9px; }
.edge-line { width: 1px; align-self: stretch; background: #555; margin-right: 4px; }
.search { width: 288px; height: 39px; display: flex; align-items: center; background: #f2f2f2; border: 1px solid #c4c4c4; padding-left: 11px; color: #333; }
.search span { width: 181px; margin-left: 11px; font-size: 15px; letter-spacing: -0.48px; }
.pin { width: 40px; margin: 0 4.500px; display: flex; align-items: center; justify-content: center; border-bottom: 2px solid #76b9ed; }
.plain { border-color: transparent; }
.p0 { margin-right: 6px; }
.active { width: 48px; margin: 0 .5px; background: #4b4b4b; }
.l-umb { margin-right: 8px; }
.l-rain { width: 63px; font-size: 13px; letter-spacing: -0.1px; }
.l-bat { margin-left: 10px; }
.l-spk { margin-left: 6px; }
.l-wifi { margin-left: 10px; }
.l-eng { width: 24px; margin-left: 9px; }
.c2 { margin-left: 11px; }
.note { position: relative; width: 20px; margin: 0 16px 0 16px; }
.note b { position: absolute; left: 7px; top: 6px; width: 17px; height: 17px; border: 1px solid #999; border-radius: 9px; background: #333; text-align: center; line-height: 15px; font-size: 11px; font-weight: 400; }
```
